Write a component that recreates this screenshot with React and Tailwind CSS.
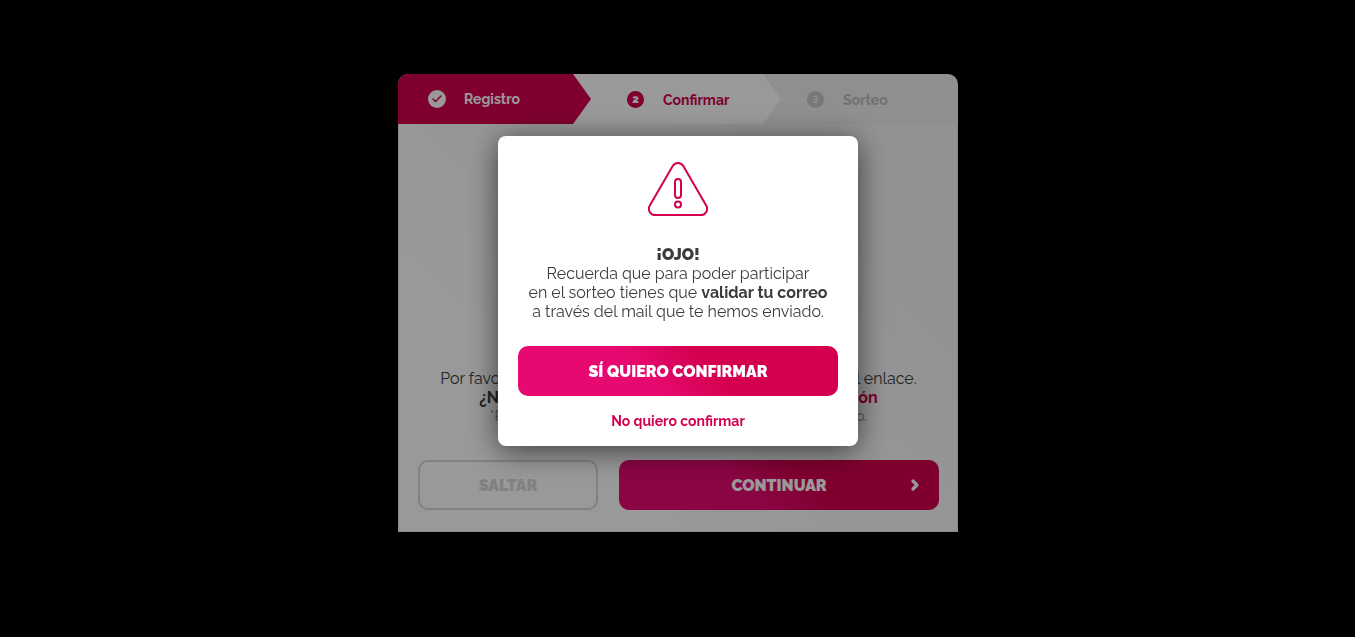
import { Check, ChevronRight } from "lucide-react";

function WarningIcon() {
  return (
    <svg className="h-14 w-15" viewBox="0 0 60 56" fill="none" stroke="#d4004f" strokeWidth="2" aria-hidden="true">
      <path d="M24.7 5a6.1 6.1 0 0 1 10.6 0L58.2 44.6a6.2 6.2 0 0 1-5.4 9.4H7.2a6.2 6.2 0 0 1-5.4-9.4Z" />
      <rect x="27" y="18" width="6" height="19" rx="3" />
      <circle cx="30" cy="43.5" r="3" />
    </svg>
  );
}

function Steps() {
  return (
    <ol className="flex h-[50px] overflow-hidden rounded-t-[10px] bg-[#eeeeee] text-sm font-bold">
      <li className="z-20 flex w-[193px] items-center gap-[18px] bg-[#d4004f] pb-px pl-[30px] text-white [clip-path:polygon(0_0,calc(100%-18px)_0,100%_50%,calc(100%-18px)_100%,0_100%)]">
        <span className="flex size-[18px] items-center justify-center rounded-full bg-white text-[#d4004f]">
          <Check size={12} strokeWidth={3} aria-hidden="true" />
        </span>
        Registro
      </li>
      <li className="z-10 -ml-[18px] flex w-[208px] items-center gap-[19px] bg-white pt-px pl-[54px] text-[#d4004f] [clip-path:polygon(0_0,calc(100%-18px)_0,100%_50%,calc(100%-18px)_100%,0_100%)]">
        <span className="flex size-[17px] items-center justify-center rounded-full bg-[#d4004f] pb-px text-[11px] leading-none font-black text-white">2</span>
        Confirmar
      </li>
      <li className="-ml-[18px] flex flex-1 items-center gap-[19px] pt-px pl-11 text-[#bdbdbd]">
        <span className="flex size-[17px] items-center justify-center rounded-full bg-[#c8c8c8] text-[10px] leading-none text-[#eeeeee] lining-nums">3</span>
        Sorteo
      </li>
    </ol>
  );
}

export default function App() {
  return (
    <div className="min-h-screen bg-black pl-px font-[Raleway,Lato,sans-serif] text-base leading-[19px] text-[#3c3c3b]">
      <main className="mx-auto w-full max-w-[560px] pt-[74px]">
        <Steps />
        <section className="border-x border-b border-[#e4e4e4] bg-linear-[45deg,#ffffff_30%,#f4f4f4_80%] pt-[245px] pr-[18px] pb-[21px] pl-[19px]">
          <div className="text-center">
            <p>Por favor, revisa tu bandeja de correo electrónico y usa el enlace.</p>
            <p className="font-bold">
              ¿No has recibido ningún correo?{" "}
              <a href="#reenviar" className="text-[#d4004f]">Reenviar validación</a>
            </p>
            <p className="text-sm leading-[19px] font-medium text-[#9c9c9c]">*Revisa también tu carpeta de spam o correo no deseado.</p>
          </div>
          <div className="mt-[34px] flex gap-[21px]">
            <button type="button" className="h-[50px] w-[180px] rounded-[10px] border-2 border-[#d8d8d8] font-black text-[#d8d8d8]">
              SALTAR
            </button>
            <button type="button" className="relative h-[50px] flex-1 rounded-[10px] bg-linear-[45deg,#e60a70_40%,#d4004f_60%] font-black text-white">
              CONTINUAR
              <ChevronRight className="absolute top-[17px] right-4" size={16} strokeWidth={5} aria-hidden="true" />
            </button>
          </div>
        </section>
      </main>

      <div className="fixed inset-0 z-30 bg-black/40 pt-[136px] pl-px">
        <div
          role="alertdialog"
          aria-modal="true"
          aria-labelledby="dialog-title"
          aria-describedby="dialog-text"
          className="mx-auto flex w-full max-w-[360px] flex-col items-center rounded-lg bg-white px-5 pt-[25px] pb-[15px] text-center shadow-[0_5px_30px_rgba(0,0,0,0.6)]"
        >
          <WarningIcon />
          <h2 id="dialog-title" className="mt-7 font-black">¡OJO!</h2>
          <p id="dialog-text">
            Recuerda que para poder participar
            <br />
            en el sorteo tienes que <strong className="font-bold">validar tu correo</strong>
            <br />a través del mail que te hemos enviado.
          </p>
          <button type="button" className="mt-[25px] h-[50px] w-full rounded-[10px] bg-linear-[45deg,#e60a70_40%,#d4004f_60%] font-black text-white">
            SÍ QUIERO CONFIRMAR
          </button>
          <button type="button" className="mt-4 text-sm leading-[19px] font-bold text-[#d4004f]">
            No quiero confirmar
          </button>
        </div>
      </div>
    </div>
  );
}
